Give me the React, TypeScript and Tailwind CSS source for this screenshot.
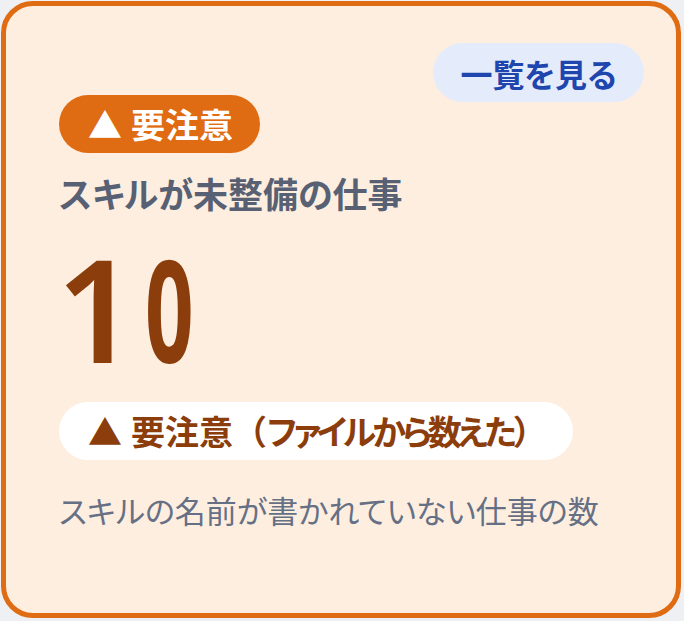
import React from "react";

const jp = "font-['Noto_Sans_CJK_JP','Noto_Sans',sans-serif] [font-feature-settings:'palt']";
const np = "[font-feature-settings:normal]";

export default function App() {
  return (
    <div className="w-[684px] h-[621px] bg-[#eef0f4] pt-[1px] pl-[1px]">
      <div className="relative w-[680px] h-[617px] rounded-[32px] border-[5px] border-[#df6b13] bg-[#feeee0] pl-[53px] pt-[89px]">
        <button
          className={`absolute top-[37px] right-[32px] w-[211px] h-[59px] rounded-full bg-[#e4ecfb] text-[#1f45ae] text-[32px] font-bold leading-none flex items-center justify-center ${jp}`}
        >
          一覧を見る
        </button>
        <div className="flex flex-col items-start">
          <div
            className={`h-[58px] rounded-full bg-[#df6b13] text-white text-[34px] font-bold leading-none flex items-center gap-[9px] pl-[29px] pr-[27px] ${jp}`}
          >
            <span>▲</span>
            <span>要注意</span>
          </div>
          <div className={`mt-[18px] text-[35px] leading-[44px] font-bold text-[#586174] ${jp}`}>
            スキルが未整備の仕事
          </div>
          <div className="mt-[22px] flex items-start font-['Noto_Sans',sans-serif] font-semibold text-[142px] leading-[142px] text-[#8b3d0b]">
            <span className="inline-block ml-[-3px]">1</span>
            <span className="inline-block origin-left [transform:scaleX(0.6)] ml-[8px] font-bold">0</span>
          </div>
          <div
            className={`mt-[23px] h-[58px] w-[514px] rounded-full bg-white text-[#8b3d0b] text-[34px] font-bold leading-none flex items-center gap-[9px] px-[29px] whitespace-nowrap ${jp}`}
          >
            <span>▲</span>
            <span>
              要注意<span className={np}>（</span>
              <span className="tracking-[-4px]">ファイルから数えた</span>
              <span className={np}>）</span>
            </span>
          </div>
          <div className={`mt-[30px] text-[31px] leading-[40px] text-[#667085] ${jp}`}>
            スキルの名前が書かれていない仕事の数
          </div>
        </div>
      </div>
    </div>
  );
}
